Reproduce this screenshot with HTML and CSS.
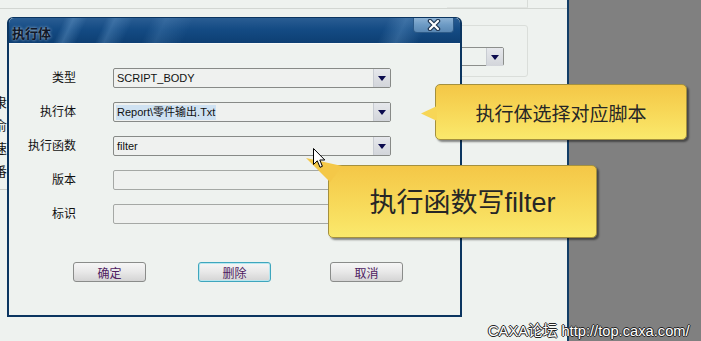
FILE: index.html
```html
<!DOCTYPE html>
<html lang="zh-CN">
<head>
  <meta charset="UTF-8">
  <title>执行体</title>
  <link rel="stylesheet" href="styles.css">
</head>
<body>
  <div class="desktop">
    <div class="bg-window">
      <div class="bg-top"><div class="bg-top-box"></div></div>
      <div class="bg-group">
        <div class="bg-combo"><span class="drop"><i></i></span></div>
      </div>
      <div class="bg-side">
        <span>隶</span><span>俞</span><span>速</span><span>番</span>
      </div>
      <div class="bg-side-line"></div>
    </div>
    <div class="gray"></div>
  </div>

  <!-- dialog window -->
  <div class="dialog">
    <div class="titlebar">
      <span class="title">执行体</span>
      <button class="close">
        <svg width="16" height="12" viewBox="0 0 16 12">
          <path d="M4 2 L12 10 M12 2 L4 10" stroke="#1d3350" stroke-width="4.5" stroke-linecap="round"/>
          <path d="M4 2 L12 10 M12 2 L4 10" stroke="#fff" stroke-width="2.2" stroke-linecap="round"/>
        </svg>
      </button>
    </div>
    <div class="dialog-body">
      <div class="form">
        <label>类型</label>
        <div class="combo"><span class="value">SCRIPT_BODY</span><span class="drop"><i></i></span></div>
        <label>执行体</label>
        <div class="combo"><span class="value selected">Report\零件输出.Txt</span><span class="drop"><i></i></span></div>
        <label>执行函数</label>
        <div class="combo"><span class="value">filter</span><span class="drop"><i></i></span></div>
        <label>版本</label>
        <div class="field"></div>
        <label>标识</label>
        <div class="field"></div>
      </div>
      <div class="buttons">
        <button class="btn">确定</button>
        <button class="btn focus">删除</button>
        <button class="btn last">取消</button>
      </div>
    </div>
  </div>

  <div class="callout one">执行体选择对应脚本</div>
  <div class="callout two">执行函数写filter</div>

  <svg class="cursor" width="13" height="21" viewBox="0 0 13 21">
    <path d="M0.5 0.5 L0.5 16.5 L4.3 12.8 L7 19.3 L9.4 18.3 L6.8 12 L11.8 12 Z" fill="#fff" stroke="#000" stroke-width="1"/>
  </svg>

  <div class="watermark">CAXA论坛 http://top.caxa.com/</div>
</body>
</html>
```

FILE: styles.css
```css
body {
  margin: 0;
  width: 701px;
  height: 341px;
  overflow: hidden;
  position: relative;
  background: #808080;
  font-family: "Liberation Sans", "Noto Sans CJK SC", sans-serif;
}

.desktop {
  display: flex;
  height: 341px;
}

.bg-window {
  width: 567px;
  background: #eef2ef;
  border-right: 2px solid #123d66;
}

.gray {
  flex: 1;
}

.bg-top {
  height: 8px;
  border-bottom: 1px solid #d2d6d2;
  display: flex;
  justify-content: flex-end;
}

.bg-top-box {
  width: 80px;
  margin-right: 39px;
  border-right: 1px solid #d8dcd8;
  border-bottom: 1px solid #e2e5e2;
}

.bg-group {
  margin: 16px 39px 0 auto;
  width: 100px;
  height: 50px;
  border: 1px solid #dadeda;
  border-radius: 3px;
  display: flex;
  justify-content: flex-end;
  align-items: flex-start;
}

.bg-combo {
  margin: 21px 23px 0 0;
  width: 60px;
  height: 17px;
  border: 1px solid #8c8f8c;
  border-radius: 2px;
  display: flex;
  justify-content: flex-end;
}

.bg-side {
  margin: 14px 0 0 -6px;
  display: flex;
  flex-direction: column;
  font-size: 13px;
  line-height: 23px;
  color: #111;
}

.bg-side-line {
  margin-top: 6px;
  width: 7px;
  border-top: 1px solid #c8ccc8;
}

/* dialog */
.dialog {
  position: absolute;
  left: 7px;
  top: 17px;
  width: 455px;
  height: 300px;
  box-sizing: border-box;
  border: 2px solid #0b3560;
  border-top-width: 1px;
  border-radius: 6px 6px 0 0;
  background: #eef2ef;
  display: flex;
  flex-direction: column;
}

.titlebar {
  height: 25px;
  flex-shrink: 0;
  display: flex;
  justify-content: space-between;
  align-items: flex-start;
  border-radius: 5px 5px 0 0;
  background:
    linear-gradient(115deg, transparent 12%, rgba(120,170,215,.35) 14%, transparent 17%,
      transparent 21%, rgba(120,170,215,.3) 23%, transparent 27%,
      transparent 31%, rgba(120,170,215,.2) 34%, transparent 40%,
      transparent 82%, rgba(120,170,215,.3) 86%, transparent 91%),
    linear-gradient(180deg, #2a5d93 0%, #144b84 45%, #0d3f73 100%);
}

.title {
  padding: 5px 0 0 3px;
  font-size: 13px;
  font-weight: bold;
  color: #101828;
  text-shadow: 0 0 3px rgba(255,255,255,.75);
}

.close {
  margin-right: 6px;
  width: 41px;
  height: 15px;
  padding: 0;
  border: 1px solid #2c5a88;
  border-top: none;
  border-radius: 0 0 4px 4px;
  background: linear-gradient(180deg, #8db2d4 0%, #6c9ac4 50%, #5a88b4 100%);
  display: flex;
  align-items: center;
  justify-content: center;
}

.dialog-body {
  flex: 1;
  border-top: 1px solid #f8faf8;
}

.form {
  display: grid;
  grid-template-columns: 67px 278px;
  grid-auto-rows: 20px;
  column-gap: 37px;
  row-gap: 14px;
  padding-top: 24px;
}

.form label {
  text-align: right;
  font-size: 12px;
  line-height: 21px;
  color: #111;
}

.combo,
.field {
  box-sizing: border-box;
  height: 20px;
  border: 1px solid #878a87;
  border-radius: 2px;
  background: #eff1ef;
  display: flex;
  align-items: center;
  justify-content: space-between;
}

.field {
  border-color: #a5a8a5;
}

.value {
  margin-left: 2px;
  padding: 0 1px;
  font-size: 11px;
  line-height: 15px;
  color: #111;
}

.value.selected {
  background: #cfe2f2;
}

.drop {
  width: 17px;
  height: 18px;
  box-sizing: border-box;
  border-left: 1px solid #c8ccd2;
  background: linear-gradient(180deg, #e6e8ec, #d2d5da);
  display: flex;
  align-items: center;
  justify-content: center;
}

.drop i {
  width: 0;
  height: 0;
  border-left: 4px solid transparent;
  border-right: 4px solid transparent;
  border-top: 5px solid #0b0b4e;
}

.buttons {
  display: flex;
  gap: 52px;
  padding: 38px 0 0 64px;
}

.btn {
  width: 73px;
  height: 20px;
  padding: 0;
  border: 1px solid #8a8c8a;
  border-radius: 3px;
  background: linear-gradient(180deg, #f6f6f6 0%, #e8e8e8 50%, #d4d4d4 100%);
  font-family: "Noto Sans CJK SC", sans-serif;
  font-size: 12px;
  color: #4e2060;
}

.btn.focus {
  border-color: #3ea6bd;
  box-shadow: inset 0 0 0 1px #b8e6ef;
}

.btn.last {
  margin-left: 7px;
}

/* callouts */
.callout {
  position: absolute;
  box-sizing: border-box;
  border: 1px solid #a4903e;
  border-radius: 5px;
  background: linear-gradient(180deg, #f4c747 0%, #f7d656 45%, #fae96c 100%);
  box-shadow: 2px 2px 2px rgba(0,0,0,.45);
  display: flex;
  align-items: center;
  justify-content: center;
  color: #262626;
}

.callout.one {
  left: 435px;
  top: 84px;
  width: 252px;
  height: 56px;
  font-size: 19px;
}

.callout.one::before {
  content: "";
  position: absolute;
  left: -15px;
  top: 21px;
  width: 16px;
  height: 15px;
  background: #f7d656;
  clip-path: polygon(0 50%, 100% 0, 100% 100%);
}

.callout.two {
  left: 328px;
  top: 165px;
  width: 269px;
  height: 73px;
  font-size: 27px;
  padding-bottom: 2px;
}

.callout.two::before {
  content: "";
  position: absolute;
  left: -23px;
  top: -8px;
  width: 36px;
  height: 24px;
  background: #f4c848;
  clip-path: polygon(0 0, 36px 8px, 24px 24px);
  filter: drop-shadow(1px 1px 0 #555);
}

.cursor {
  position: absolute;
  left: 313px;
  top: 148px;
}

.watermark {
  position: absolute;
  left: 488px;
  top: 319px;
  font-size: 14.7px;
  color: #fff;
  text-shadow: -1px 0 #222, 1px 0 #222, 0 -1px #222, 0 1px #222;
}
```
